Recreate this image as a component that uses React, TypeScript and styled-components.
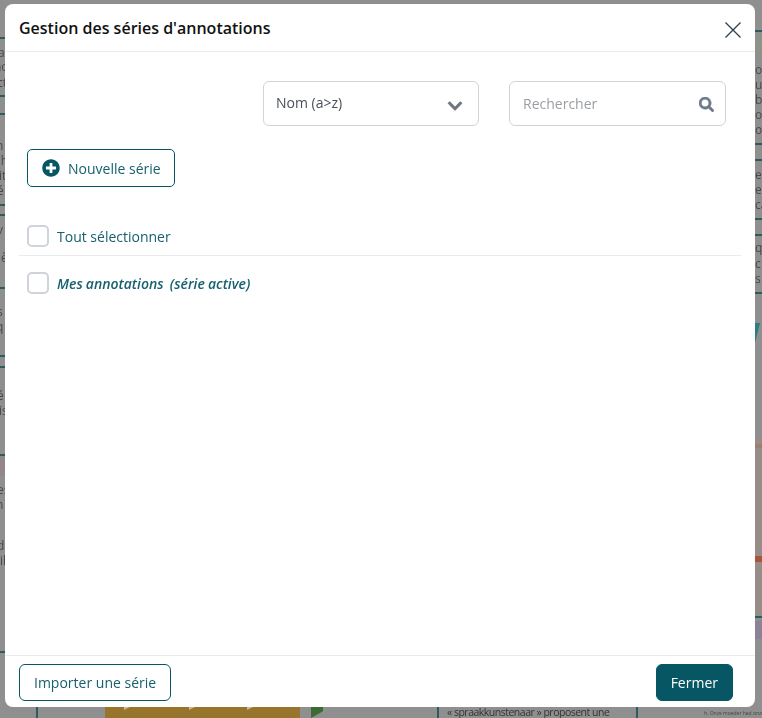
import styled, { createGlobalStyle } from 'styled-components';
import { FaChevronDown, FaPlusCircle, FaSearch } from 'react-icons/fa';

const teal = '#065664';
const tealText = '#17606e';

const GlobalStyle = createGlobalStyle`
  html, body {
    margin: 0;
    padding: 0;
    height: 100%;
    overflow: hidden;
    background: #8f8f8f;
    font-family: "Open Sans", "Noto Sans", sans-serif;
  }
`;

// the blurred document that shows around the dialog
const Backdrop = styled.div`
  position: fixed;
  inset: 0;
  overflow: hidden;
  filter: blur(0.6px);
`;

const Strip = styled.div<{ $side: 'left' | 'right' }>`
  position: absolute;
  top: 0;
  bottom: 0;
  ${p => p.$side}: 0;
  width: ${p => (p.$side === 'left' ? 5 : 7)}px;
  overflow: hidden;
`;

const Rule = styled.div<{ $top: number }>`
  position: absolute;
  top: ${p => p.$top}px;
  left: 0;
  right: 0;
  height: 1.5px;
  background: #2f5a5f;
`;

const Column = styled.div<{ $left: number }>`
  position: absolute;
  top: 702px;
  left: ${p => p.$left}px;
  width: 1.5px;
  height: 16px;
  background: #2f5a5f;
`;

const Patch = styled.div<{ $x: number; $y: number; $w: number; $h: number; $color: string; $clip?: string }>`
  position: absolute;
  left: ${p => p.$x}px;
  top: ${p => p.$y}px;
  width: ${p => p.$w}px;
  height: ${p => p.$h}px;
  background: ${p => p.$color};
  clip-path: ${p => p.$clip ?? 'none'};
`;

const Snippet = styled.span<{ $x: number; $y: number }>`
  position: absolute;
  left: ${p => p.$x}px;
  top: ${p => p.$y}px;
  font-size: 12px;
  line-height: 1;
  color: #4a4a4a;
  white-space: nowrap;
`;

const Caption = styled.span`
  position: absolute;
  left: 447px;
  top: 707px;
  font-size: 10.5px;
  letter-spacing: -0.5px;
  line-height: 1;
  color: #333;
  white-space: nowrap;
`;

const Footnote = styled.span`
  position: absolute;
  left: 704px;
  top: 711px;
  font-size: 5px;
  line-height: 1;
  color: #444;
  white-space: nowrap;
`;

const Overlay = styled.div`
  position: fixed;
  inset: 0;
  display: flex;
  padding: 4px 7px 11px 5px;
  box-sizing: border-box;
`;

const Modal = styled.div`
  width: 750px;
  height: 703px;
  background: #fff;
  border-radius: 8px;
  display: flex;
  flex-direction: column;
`;

const Header = styled.header`
  height: 48px;
  box-sizing: border-box;
  flex: none;
  display: flex;
  align-items: center;
  justify-content: space-between;
  padding: 0 14px;
  border-bottom: 1px solid #e9ecef;
`;

const Title = styled.h2`
  margin: 0;
  font-size: 16px;
  font-weight: 600;
  color: #111;
`;

const CloseButton = styled.button`
  border: 0;
  background: none;
  padding: 0;
  width: 16px;
  height: 16px;
  margin-top: 5px;
  display: flex;
  color: #2c3e50;
`;

const Body = styled.main`
  flex: 1;
  padding: 29px 14px 0;
  display: flex;
  flex-direction: column;
`;

const Filters = styled.div`
  display: flex;
  justify-content: flex-end;
  gap: 30px;
  padding-right: 15px;
`;

const Field = styled.div<{ $width: number }>`
  width: ${p => p.$width}px;
  height: 45px;
  box-sizing: border-box;
  border: 1px solid #ced4da;
  border-radius: 6px;
  display: flex;
  align-items: center;
  justify-content: space-between;
  padding: 0 15px 0 12px;
  font-size: 14px;
  color: #495057;
`;

const SearchField = styled(Field)`
  padding: 0 11px 0 13px;
`;

const SortLabel = styled.span`
  margin-top: -2px;
`;

const Placeholder = styled.span`
  color: #9a9ea3;
`;

const Chevron = styled(FaChevronDown)`
  font-size: 16px;
  color: #6c757d;
  margin-top: 4px;
  stroke: currentColor;
  stroke-width: 24;
`;

const SearchIcon = styled(FaSearch)`
  font-size: 15px;
  color: #6c7a89;
  margin-top: 2px;
  stroke: currentColor;
  stroke-width: 16;
`;

const NewButton = styled.button`
  align-self: flex-start;
  margin: 23px 0 0 8px;
  height: 38px;
  padding: 0 13.5px 0 14px;
  display: flex;
  align-items: center;
  gap: 8px;
  background: #fff;
  border: 1px solid ${teal};
  border-radius: 5px;
  color: ${tealText};
  font: 14px "Open Sans", "Noto Sans", sans-serif;

  svg {
    font-size: 18px;
    color: ${teal};
  }
`;

const Row = styled.label`
  display: flex;
  align-items: center;
  gap: 8px;
  padding: 0 8px;
  color: ${tealText};
  font-size: 14px;
`;

const SelectAll = styled(Row)`
  margin-top: 27px;
  height: 42px;
  box-sizing: border-box;
  padding-top: 4px;
  padding-bottom: 1px;
  border-bottom: 1px solid #e9ecef;
`;

const SeriesRow = styled(Row)`
  margin-top: 16px;
  height: 22px;
`;

const Box = styled.span`
  width: 22px;
  height: 22px;
  box-sizing: border-box;
  border: 2px solid #ced4da;
  border-radius: 5px;
  flex: none;
`;

const Active = styled.span`
  font-style: italic;
  font-weight: 600;
  font-size: 14px;
  word-spacing: -0.5px;
  margin-top: 1px;
  white-space: pre;
`;

const Footer = styled.footer`
  height: 52px;
  box-sizing: border-box;
  flex: none;
  border-top: 1px solid #e9ecef;
  display: flex;
  align-items: center;
  justify-content: space-between;
  padding: 1px 22px 0 14px;
`;

const OutlineButton = styled.button`
  height: 37px;
  padding: 0 14px;
  background: #fff;
  border: 1px solid ${teal};
  border-radius: 6px;
  color: ${tealText};
  font: 14px "Open Sans", "Noto Sans", sans-serif;
`;

const SolidButton = styled(OutlineButton)`
  background: ${teal};
  color: #fff;
`;

const leftRules = [37, 95, 113, 204, 214, 287, 355, 366, 454, 651];
const rightRules = [30, 143, 159, 218, 234, 292, 616];
const columns = [36, 437, 636];

const leftSnippets = [
  { x: -2, y: 47, text: 'a' },
  { x: -6, y: 61, text: 'ho' },
  { x: -3, y: 77, text: 'ct' },
  { x: -4, y: 140, text: 'n' },
  { x: -2, y: 155, text: "'h" },
  { x: -1, y: 170, text: 'it' },
  { x: -3, y: 185, text: 'é' },
  { x: -3, y: 224, text: 'v' },
  { x: -2, y: 252, text: 'iè' },
  { x: -3, y: 306, text: 's' },
  { x: -4, y: 321, text: 'q' },
  { x: -3, y: 390, text: 'é' },
  { x: -1, y: 405, text: 'is' },
  { x: -3, y: 484, text: 'es' },
  { x: -4, y: 499, text: 'n' },
  { x: -3, y: 540, text: 'd' },
  { x: 0, y: 555, text: 'il' },
];

const rightSnippets = [
  { x: 0, y: 64, text: 'oc' },
  { x: 0, y: 79, text: 'ur' },
  { x: 0, y: 94, text: 'bo' },
  { x: 0, y: 109, text: 'o' },
  { x: 0, y: 124, text: 'o' },
  { x: 0, y: 169, text: 'es' },
  { x: 0, y: 184, text: 'e,' },
  { x: 0, y: 199, text: 'ca' },
  { x: 0, y: 242, text: 'q' },
  { x: 0, y: 258, text: 'c' },
  { x: 0, y: 273, text: 's' },
];

const patches = [
  { x: 105, y: 700, w: 195, h: 18, color: '#98752c' },
  { x: 124, y: 707, w: 6, h: 3, color: '#c9bb94', clip: 'polygon(0 100%, 100% 0, 0 0)' },
  { x: 189, y: 707, w: 6, h: 3, color: '#c9bb94', clip: 'polygon(0 100%, 100% 0, 0 0)' },
  { x: 247, y: 707, w: 6, h: 3, color: '#c9bb94', clip: 'polygon(0 100%, 100% 0, 0 0)' },
  { x: 311, y: 700, w: 12, h: 18, color: '#3c6b35', clip: 'polygon(0 0, 100% 0, 100% 62%, 0 100%)' },
  { x: 755, y: 437, w: 7, h: 178, color: '#978d88' },
  { x: 755, y: 444, w: 7, h: 4, color: '#9a7f72' },
  { x: 755, y: 556, w: 7, h: 6, color: '#a8553a' },
  { x: 755, y: 621, w: 7, h: 18, color: '#8b8296' },
  { x: 755, y: 36, w: 7, h: 16, color: '#8c9388' },
  { x: 755, y: 323, w: 5, h: 20, color: '#2a7d80', clip: 'polygon(0 0, 100% 0, 0 100%)' },
  { x: 0, y: 456, w: 5, h: 20, color: '#94878a' },
];

export default function App() {
  return (
    <>
      <GlobalStyle />
      <Backdrop>
        {patches.map(p => (
          <Patch key={`${p.x}-${p.y}`} $x={p.x} $y={p.y} $w={p.w} $h={p.h} $color={p.color} $clip={p.clip} />
        ))}
        <Strip $side="left">
          {leftRules.map(y => (
            <Rule key={y} $top={y} />
          ))}
          {leftSnippets.map(s => (
            <Snippet key={s.y} $x={s.x} $y={s.y}>
              {s.text}
            </Snippet>
          ))}
        </Strip>
        <Strip $side="right">
          {rightRules.map(y => (
            <Rule key={y} $top={y} />
          ))}
          {rightSnippets.map(s => (
            <Snippet key={s.y} $x={s.x} $y={s.y}>
              {s.text}
            </Snippet>
          ))}
        </Strip>
        {columns.map(x => (
          <Column key={x} $left={x} />
        ))}
        <Caption>« spraakkunstenaar » proposent une</Caption>
        <Footnote>h. Onze moeder had onze zak</Footnote>
      </Backdrop>
      <Overlay>
        <Modal>
          <Header>
            <Title>Gestion des séries d'annotations</Title>
            <CloseButton aria-label="Fermer">
              <svg width="16" height="16" viewBox="0 0 16 16">
                <path d="M.5.5l15 15M15.5.5l-15 15" stroke="currentColor" strokeWidth="1.3" fill="none" />
              </svg>
            </CloseButton>
          </Header>
          <Body>
            <Filters>
              <Field $width={216}>
                <SortLabel>Nom (a&gt;z)</SortLabel>
                <Chevron />
              </Field>
              <SearchField $width={217}>
                <Placeholder>Rechercher</Placeholder>
                <SearchIcon />
              </SearchField>
            </Filters>
            <NewButton>
              <FaPlusCircle />
              Nouvelle série
            </NewButton>
            <SelectAll>
              <Box />
              <span>Tout sélectionner</span>
            </SelectAll>
            <SeriesRow>
              <Box />
              <Active>Mes annotations  (série active)</Active>
            </SeriesRow>
          </Body>
          <Footer>
            <OutlineButton>Importer une série</OutlineButton>
            <SolidButton>Fermer</SolidButton>
          </Footer>
        </Modal>
      </Overlay>
    </>
  );
}
